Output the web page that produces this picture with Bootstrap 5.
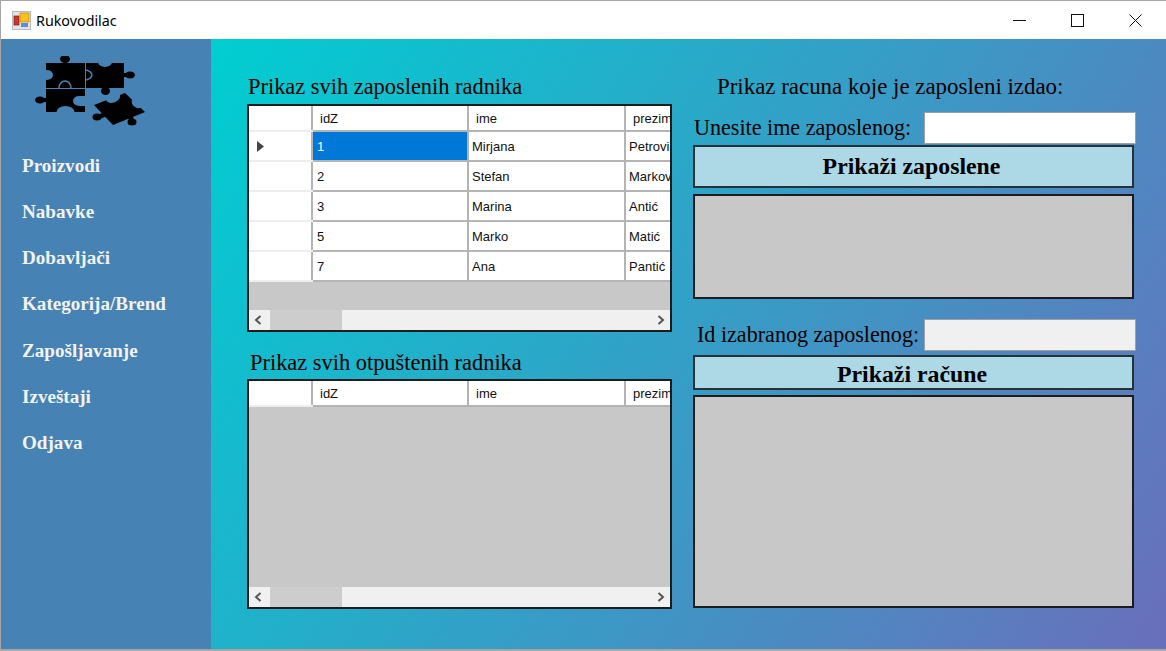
<!doctype html>
<html lang="sr">
<head>
<meta charset="utf-8">
<title>Rukovodilac</title>
<link href="https://cdn.jsdelivr.net/npm/bootstrap@5.3.0/dist/css/bootstrap.min.css" rel="stylesheet">
<style>
html,body{margin:0;height:651px;overflow:hidden;background:#a6a6a6}
body{padding:1px 0 2px 1px;font-family:"Liberation Serif",serif;color:#000}
.win{height:648px;width:1165px;background:#fff;display:flex;flex-direction:column}
.tbar{height:38px;flex:none;padding-left:11px;padding-right:2px;font:14.3px "Noto Sans",sans-serif;background:#fff}
.tbar .ttl{margin-left:5px}
.ctl{width:58px;height:38px;display:flex;align-items:center;justify-content:center}
.bodyarea{flex:1;display:flex;min-height:0}
.side{width:210px;flex:none;background:#4682b4}
.logo{display:block;margin:17px 0 0 31px}
.side .nav{margin-top:15px}
.side .nav-link{padding:0 0 0 21px;height:46.17px;font:bold 19.1px/46px "Liberation Serif",serif;color:#f3f3f3}
.mainp{flex:1;background:linear-gradient(122deg,#00ced1,#6a6fbb);display:flex;padding-top:35px}
.lcol{width:425px;margin-left:36px}
.rcol{width:443px;margin-left:21px}
.heading{font-size:22.4px;line-height:26px;margin:0 0 4px 1px;font-weight:400;color:#000}
.h2nd{margin:18px 0 3px 3px}
.dgrid{height:228px;border:2px solid #1c1c1c;background:#c8c8c8;overflow:hidden;display:flex;flex-direction:column}
.dgrid.tall{height:230px}
.tblwrap{flex:1;overflow:hidden;min-height:0}
.dtbl{table-layout:fixed;width:600px;border-collapse:collapse;font:13px "Liberation Sans",sans-serif;color:#111;background:#fff}
.dtbl th{font-weight:400;height:25px;background:#fff;border-right:2px solid #b4b4b4;border-bottom:2px solid #b4b4b4;padding:0 0 0 7px}
.dtbl td{height:30px;border-right:2px solid #b4b4b4;border-bottom:2px solid #b4b4b4;padding:0 0 0 3px;white-space:nowrap;overflow:hidden}
.dtbl .rh{width:63px;background:#fff;border-bottom-color:#eee;padding:0 0 0 8px;color:#444;border-right-color:#b4b4b4}
.dtbl .c1{width:156px}.dtbl .c2{width:157px}
.dtbl td.num{padding-left:4px}
.dtbl td.sel{background:#0078d7;color:#fff}
.arrow{display:block}
.hscroll{height:20px;flex:none;background:#f0f0f0;display:flex;align-items:center;justify-content:space-between;padding:0 5px 0 5px;position:relative}
.thumb{position:absolute;left:21px;top:0;width:72px;height:100%;background:#cdcdcd}
.lblrow{display:flex;align-items:center;height:32px}
.lblrow label{font-size:22.1px;line-height:26px;white-space:nowrap}
.fld{width:212px;height:32px;margin-left:auto;border:1px solid #a0a0a0;background:#fff;border-radius:0;padding:0}
.fld:disabled{background:#f0f0f0}
.actbtn{display:block;width:441px;background:#add8e6;border:2px solid #263238;border-radius:0;font:bold 23.8px "Liberation Serif",serif;color:#000;padding:0 4px 0 0}
.actbtn:hover,.actbtn:active{background:#add8e6!important;color:#000!important;border-color:#263238!important}
.graybox{width:441px;background:#c8c8c8;border:2px solid #1c1c1c}
.ttlr{margin:0 0 0 24px;font-size:22.9px}
.rowa{margin-top:12px}
.rowa label{margin-left:1px}
.btna{height:43px;margin-top:1px}
.boxa{height:105px;margin-top:6px}
.rowb{margin-top:20px}
.rowb label{margin-left:4px}
.btnb{height:35px;margin-top:4px;padding:4px 3px 0 0}
.boxb{height:213px;margin-top:5px}
</style>
</head>
<body>
<div class="win">
  <div class="tbar d-flex align-items-center">
    <svg width="19" height="19" viewBox="0 0 19 19"><rect x=".5" y=".5" width="18" height="18" fill="#e4e4e4" stroke="#bbb"/><rect x="2" y="5" width="5" height="9" fill="#c9372e" stroke="#7d1f1b" stroke-width=".7"/><rect x="8" y="2" width="9" height="9" fill="#fbc21f" stroke="#b88a10" stroke-width=".7"/><rect x="9" y="12" width="7" height="4" fill="#5a8fe0"/></svg>
    <span class="ttl">Rukovodilac</span>
    <div class="d-flex ms-auto">
      <div class="ctl"><svg width="13" height="13" viewBox="0 0 13 13"><path d="M0 6.5H13" stroke="#111"/></svg></div>
      <div class="ctl"><svg width="13" height="13" viewBox="0 0 13 13"><rect x=".5" y=".5" width="12" height="12" fill="none" stroke="#111"/></svg></div>
      <div class="ctl"><svg width="13" height="13" viewBox="0 0 13 13"><path d="M.5.5L12.5 12.5M12.5.5L.5 12.5" stroke="#111"/></svg></div>
    </div>
  </div>
  <div class="bodyarea">
    <aside class="side">
      <svg class="logo" width="115" height="72" viewBox="32 56 115 72">
        <g fill="#000">
          <rect x="46" y="63" width="39" height="25"/>
          <rect x="86" y="63" width="38" height="25"/>
          <rect x="46" y="89" width="39" height="23"/>
          <path d="M94 105L125 93L145 112L113 125Z"/>
          <ellipse cx="65" cy="59" rx="5" ry="4"/><rect x="63" y="60" width="4" height="4"/>
          <ellipse cx="130" cy="75" rx="5" ry="3.500"/><rect x="123" y="73" width="5" height="4"/>
          <ellipse cx="105.500" cy="91" rx="4.500" ry="4"/>
          <ellipse cx="40" cy="100" rx="5" ry="3.500"/><rect x="43" y="98" width="4" height="4"/>
          <ellipse cx="97" cy="117" rx="4.500" ry="3.500"/><path d="M98 115L104 112L107 116L100 119Z"/>
          <ellipse cx="132" cy="122" rx="4.500" ry="3.500"/><path d="M128 118L133 116L134 121L130 122Z"/>
        </g>
        <g fill="#4682b4">
          <ellipse cx="47" cy="75" rx="6" ry="5"/>
          <ellipse cx="105" cy="62" rx="7" ry="5"/>
          <ellipse cx="79" cy="101" rx="6" ry="5"/><rect x="80" y="96" width="6" height="10"/>
          <ellipse cx="65.500" cy="112" rx="9" ry="6"/>
          <ellipse cx="113" cy="97.500" rx="7.500" ry="5" transform="rotate(-22 113 97.500)"/>
          <ellipse cx="137" cy="103" rx="6" ry="4.500" transform="rotate(42 137 103)"/>
        </g>
        <path d="M59 88a6 7 0 0 1 12 0" fill="none" stroke="#4682b4" stroke-width="1.500"/>
        <path d="M86 70a10 5.500 0 0 1 0 10" fill="none" stroke="#4682b4" stroke-width="1.500"/>
      </svg>
      <nav class="nav flex-column">
        <a class="nav-link" href="#">Proizvodi</a>
        <a class="nav-link" href="#">Nabavke</a>
        <a class="nav-link" href="#">Dobavljači</a>
        <a class="nav-link" href="#">Kategorija/Brend</a>
        <a class="nav-link" href="#">Zapošljavanje</a>
        <a class="nav-link" href="#">Izveštaji</a>
        <a class="nav-link" href="#">Odjava</a>
      </nav>
    </aside>
    <main class="mainp">
      <section class="lcol">
        <h2 class="heading">Prikaz svih zaposlenih radnika</h2>
        <div class="dgrid">
          <div class="tblwrap">
            <table class="dtbl">
              <thead><tr><th class="rh"></th><th class="c1">idZ</th><th class="c2">ime</th><th>prezime</th></tr></thead>
              <tbody>
                <tr><td class="rh"><svg class="arrow" width="7" height="11" viewBox="0 0 7 11"><path d="M0 0L7 5.500L0 11Z" fill="#444"/></svg></td><td class="sel num">1</td><td>Mirjana</td><td>Petrović</td></tr>
                <tr><td class="rh"></td><td class="num">2</td><td>Stefan</td><td>Marković</td></tr>
                <tr><td class="rh"></td><td class="num">3</td><td>Marina</td><td>Antić</td></tr>
                <tr><td class="rh"></td><td class="num">5</td><td>Marko</td><td>Matić</td></tr>
                <tr><td class="rh"></td><td class="num">7</td><td>Ana</td><td>Pantić</td></tr>
              </tbody>
            </table>
          </div>
          <div class="hscroll">
            <svg width="8" height="10" viewBox="0 0 8 10"><path d="M6.500 1L2 5L6.500 9" fill="none" stroke="#555" stroke-width="2"/></svg>
            <span class="thumb"></span>
            <svg width="8" height="10" viewBox="0 0 8 10"><path d="M1.500 1L6 5L1.500 9" fill="none" stroke="#555" stroke-width="2"/></svg>
          </div>
        </div>
        <h2 class="heading h2nd">Prikaz svih otpuštenih radnika</h2>
        <div class="dgrid tall">
          <div class="tblwrap">
            <table class="dtbl">
              <thead><tr><th class="rh"></th><th class="c1">idZ</th><th class="c2">ime</th><th>prezime</th></tr></thead>
            </table>
          </div>
          <div class="hscroll">
            <svg width="8" height="10" viewBox="0 0 8 10"><path d="M6.500 1L2 5L6.500 9" fill="none" stroke="#555" stroke-width="2"/></svg>
            <span class="thumb"></span>
            <svg width="8" height="10" viewBox="0 0 8 10"><path d="M1.500 1L6 5L1.500 9" fill="none" stroke="#555" stroke-width="2"/></svg>
          </div>
        </div>
      </section>
      <section class="rcol">
        <h2 class="heading ttlr">Prikaz racuna koje je zaposleni izdao:</h2>
        <div class="lblrow rowa"><label for="ime">Unesite ime zaposlenog:</label><input id="ime" class="fld" type="text"></div>
        <button class="btn actbtn btna" type="button">Prikaži zaposlene</button>
        <div class="graybox boxa"></div>
        <div class="lblrow rowb"><label for="idz">Id izabranog zaposlenog:</label><input id="idz" class="fld" type="text" disabled></div>
        <button class="btn actbtn btnb" type="button">Prikaži račune</button>
        <div class="graybox boxb"></div>
      </section>
    </main>
  </div>
</div>
<script src="https://cdn.jsdelivr.net/npm/bootstrap@5.3.0/dist/js/bootstrap.bundle.min.js"></script>
</body>
</html>
